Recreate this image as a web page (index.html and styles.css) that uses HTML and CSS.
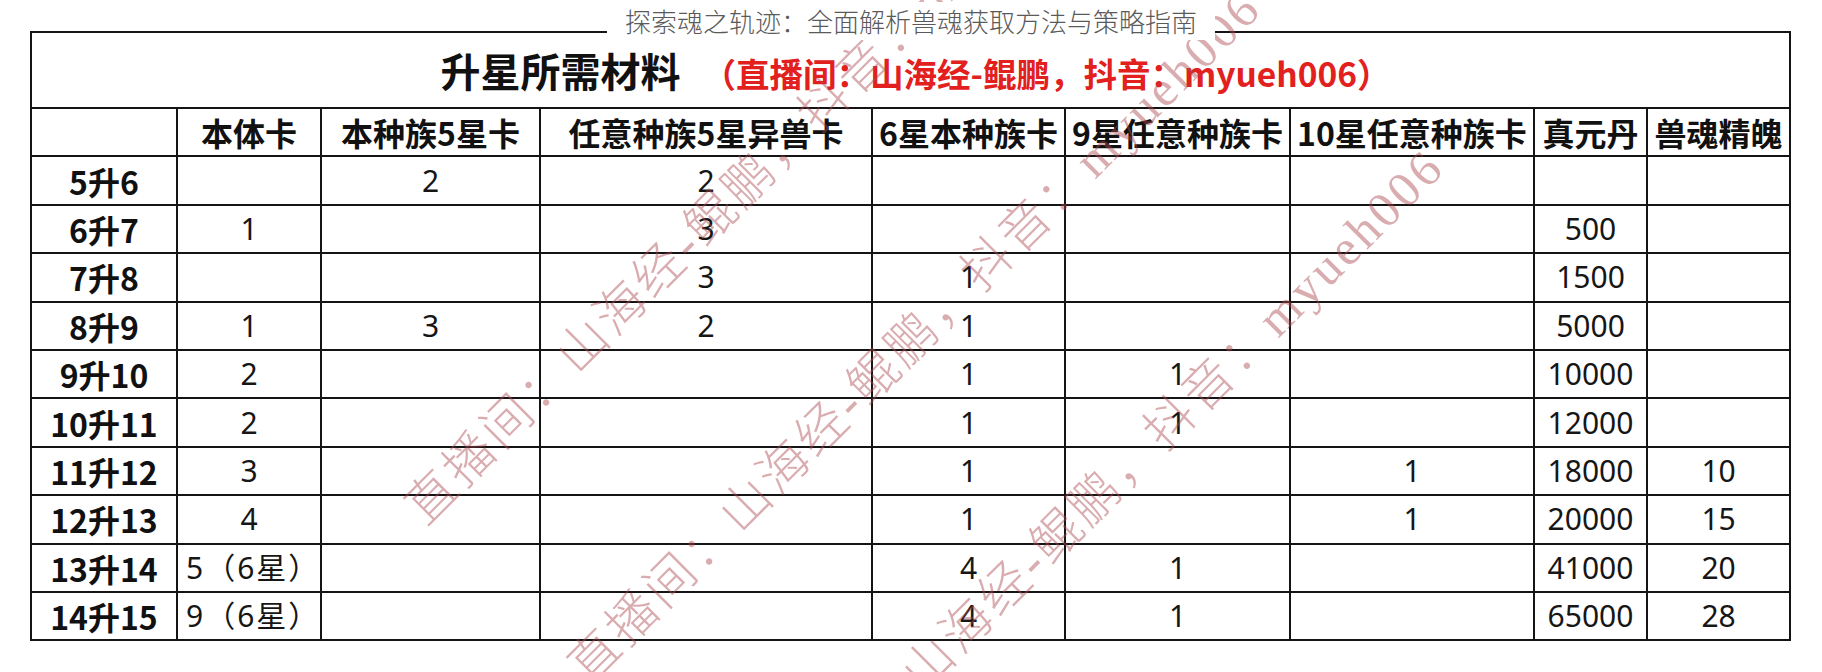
FILE: index.html
```html
<!DOCTYPE html>
<html lang="zh-CN">
<head>
<meta charset="utf-8">
<title>升星所需材料</title>
<link rel="stylesheet" href="styles.css">
</head>
<body>
<div class="page">
  <div class="caption">探索魂之轨迹：全面解析兽魂获取方法与策略指南</div>
  <table class="sheet">
    <colgroup>
      <col class="c1"><col class="c2"><col class="c3"><col class="c4"><col class="c5"><col class="c6"><col class="c7"><col class="c8"><col class="c9">
    </colgroup>
    <tr class="title-row">
      <td colspan="9"><span class="title">升星所需材料</span><span class="note">（直播间：山海经-鲲鹏，抖音：myueh006）</span></td>
    </tr>
    <tr class="head">
      <th></th><th>本体卡</th><th>本种族5星卡</th><th>任意种族5星异兽卡</th><th>6星本种族卡</th><th>9星任意种族卡</th><th>10星任意种族卡</th><th>真元丹</th><th>兽魂精魄</th>
    </tr>
    <tr><th>5升6</th><td></td><td>2</td><td>2</td><td></td><td></td><td></td><td></td><td></td></tr>
    <tr><th>6升7</th><td>1</td><td></td><td>3</td><td></td><td></td><td></td><td>500</td><td></td></tr>
    <tr><th>7升8</th><td></td><td></td><td>3</td><td>1</td><td></td><td></td><td>1500</td><td></td></tr>
    <tr><th>8升9</th><td>1</td><td>3</td><td>2</td><td>1</td><td></td><td></td><td>5000</td><td></td></tr>
    <tr><th>9升10</th><td>2</td><td></td><td></td><td>1</td><td>1</td><td></td><td>10000</td><td></td></tr>
    <tr><th>10升11</th><td>2</td><td></td><td></td><td>1</td><td>1</td><td></td><td>12000</td><td></td></tr>
    <tr><th>11升12</th><td>3</td><td></td><td></td><td>1</td><td></td><td>1</td><td>18000</td><td>10</td></tr>
    <tr><th>12升13</th><td>4</td><td></td><td></td><td>1</td><td></td><td>1</td><td>20000</td><td>15</td></tr>
    <tr><th>13升14</th><td class="star">5（6星）</td><td></td><td></td><td>4</td><td>1</td><td></td><td>41000</td><td>20</td></tr>
    <tr><th>14升15</th><td class="star">9（6星）</td><td></td><td></td><td>4</td><td>1</td><td></td><td>65000</td><td>28</td></tr>
  </table>
  <div class="watermark" aria-hidden="true">
    <span class="wm wm1">直播间：山海经-鲲鹏，抖音：myueh006</span>
    <span class="wm wm2">直播间：山海经-鲲鹏，抖音：myueh006</span>
    <span class="wm wm3">直播间：山海经-鲲鹏，抖音：myueh006</span>
  </div>
</div>
</body>
</html>
```

FILE: styles.css
```css
html, body {
  margin: 0;
  padding: 0;
  background: #ffffff;
}

.page {
  position: relative;
  width: 1822px;
  height: 672px;
  overflow: hidden;
  box-sizing: border-box;
  padding: 31px 0 0 30px;
  background: #ffffff;
}

.caption {
  position: absolute;
  top: 2px;
  left: 50%;
  transform: translateX(-50%);
  z-index: 3;
  padding: 0 18px;
  background: #ffffff;
  font-family: "Noto Sans CJK SC", sans-serif;
  font-size: 26px;
  font-weight: 300;
  line-height: 38px;
  color: #5a5a5a;
  white-space: nowrap;
}

.sheet {
  border-collapse: collapse;
  table-layout: fixed;
  width: 1760px;
  font-family: "Noto Sans", "Noto Sans CJK SC", sans-serif;
  color: #161616;
}

.c1 { width: 146px; }
.c2 { width: 144px; }
.c3 { width: 219px; }
.c4 { width: 332px; }
.c5 { width: 193px; }
.c6 { width: 225px; }
.c7 { width: 244px; }
.c8 { width: 113px; }
.c9 { width: 143px; }

.sheet td,
.sheet th {
  border: 2px solid #141414;
  padding: 0;
  text-align: center;
  vertical-align: middle;
  white-space: nowrap;
  overflow: hidden;
}

.sheet tr {
  height: 48.4px;
}

.sheet td {
  font-size: 30px;
  font-weight: 400;
  line-height: 1;
}

.sheet td.star {
  text-align: left;
  padding-left: 8px;
  letter-spacing: 2px;
}

.sheet th {
  font-family: "Noto Sans CJK SC", sans-serif;
  font-size: 32px;
  font-weight: 700;
  line-height: 1;
  color: #111111;
}

.sheet .title-row {
  height: 76px;
}

.title-row td {
  padding-left: 10px;
  font-family: "Noto Sans CJK SC", sans-serif;
}

.title {
  font-size: 40px;
  font-weight: 700;
  color: #111111;
}

.note {
  margin-left: 22px;
  font-size: 33.5px;
  font-weight: 700;
  color: #e2201e;
}

.watermark {
  position: absolute;
  inset: 0;
  z-index: 2;
  pointer-events: none;
}

.wm {
  position: absolute;
  transform-origin: 0 50%;
  transform: rotate(-45deg);
  font-family: "Liberation Serif", "Noto Sans CJK SC", serif;
  font-size: 50px;
  font-weight: 300;
  line-height: 50px;
  letter-spacing: 3.5px;
  color: rgba(170, 70, 80, 0.45);
  white-space: nowrap;
}

.wm1 { left: 414px; top: 490px; }
.wm2 { left: 577px; top: 649px; }
.wm3 { left: 760px; top: 808px; }
```
